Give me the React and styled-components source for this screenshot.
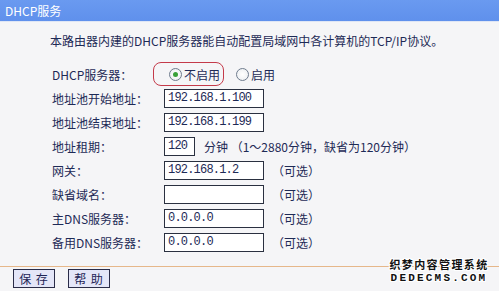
import React, { useState } from 'react';
import styled, { createGlobalStyle } from 'styled-components';

const GlobalStyle = createGlobalStyle`
  html, body {
    margin: 0;
    padding: 0;
    background: #f5f5f7;
  }
  body {
    font-family: "Noto Sans CJK SC", "Liberation Sans", sans-serif;
    font-size: 12px;
    color: #1e2a56;
  }
`;

const Page = styled.div`
  position: relative;
  width: 499px;
  height: 291px;
  overflow: hidden;
  background: #f5f5f7;
`;

const Header = styled.div`
  height: 21px;
  background: linear-gradient(#6a9af0, #5f90ec);
  border-bottom: 1px solid #dfe6f5;
  color: #fff;
  font-size: 12px;
  line-height: 21px;
  padding-left: 5px;
`;

const Intro = styled.p`
  margin: 12px 0 0 50px;
  line-height: 14px;
  height: 14px;
  white-space: nowrap;
`;

const Form = styled.div`
  margin: 14px 0 0 52px;
  display: grid;
  grid-template-columns: 112px 1fr;
  grid-auto-rows: 24px;
  align-items: center;
`;

const Label = styled.div`
  white-space: nowrap;
`;

const Field = styled.div`
  display: flex;
  align-items: center;
  white-space: nowrap;
`;

const Input = styled.input`
  box-sizing: border-box;
  width: ${({ w }) => w || 100}px;
  height: 19px;
  border: 1px solid #2a3040;
  background: #fff;
  padding: 0 3px;
  font-family: "Liberation Mono", monospace;
  font-size: 12px;
  letter-spacing: -0.8px;
  color: #1e2a56;
  outline: none;
`;

const Note = styled.span`
  margin-left: ${({ gap }) => gap || 8}px;
`;

const Highlight = styled.span`
  display: flex;
  align-items: center;
  box-sizing: border-box;
  height: 24px;
  margin-left: -11px;
  padding: 0 3px 0 15px;
  border: 1px solid #c43a4a;
  border-radius: 8px;
`;

const RadioLabel = styled.label`
  display: flex;
  align-items: center;
  cursor: pointer;
  margin-left: ${({ gap }) => gap || 0}px;
`;

const RadioCircle = styled.span`
  box-sizing: border-box;
  width: 13px;
  height: 13px;
  margin-right: 2px;
  border-radius: 50%;
  border: 1px solid #6f7c8e;
  background: radial-gradient(circle, #fff 0%, #e9ecef 100%);
  display: flex;
  align-items: center;
  justify-content: center;
  &::after {
    content: '';
    width: 5px;
    height: 5px;
    border-radius: 50%;
    background: ${({ checked }) => (checked ? '#38a038' : 'transparent')};
  }
`;

const Divider = styled.div`
  margin-top: 12px;
  height: 1px;
  background: #e6b78a;
`;

const Footer = styled.div`
  display: flex;
  gap: 13px;
  padding: 2px 0 0 13px;
`;

const Button = styled.button`
  box-sizing: border-box;
  width: 42px;
  height: 19px;
  padding: 0;
  border: 1px solid #2a2c48;
  background: #e4e6f8;
  color: #1e2456;
  font-family: "Noto Sans CJK SC", sans-serif;
  font-size: 12px;
  line-height: 17px;
  letter-spacing: 1px;
  cursor: pointer;
`;

const Watermark = styled.div`
  position: absolute;
  right: 10px;
  top: 256px;
  width: 100px;
  display: flex;
  flex-direction: column;
  align-items: center;
  color: #111;
  font-weight: bold;
  text-shadow: -1px -1px 0 #fff, 1px -1px 0 #fff, -1px 1px 0 #fff, 1px 1px 0 #fff,
    0 1px 0 #fff, 0 -1px 0 #fff, 1px 0 0 #fff, -1px 0 0 #fff;
`;

const MarkCn = styled.div`
  font-size: 11px;
  line-height: 16px;
  letter-spacing: 1.4px;
  white-space: nowrap;
`;

const MarkEn = styled.div`
  font-family: "Liberation Mono", monospace;
  font-size: 11px;
  line-height: 13px;
  letter-spacing: 2.2px;
  white-space: nowrap;
`;

const rows = [
  { label: '地址池开始地址：', value: '192.168.1.100' },
  { label: '地址池结束地址：', value: '192.168.1.199' },
  { label: '地址租期：', value: '120', w: 31, note: '分钟 （1～2880分钟，缺省为120分钟）', gap: 9 },
  { label: '网关：', value: '192.168.1.2', note: '（可选）' },
  { label: '缺省域名：', value: '', note: '（可选）' },
  { label: '主DNS服务器：', value: '0.0.0.0', note: '（可选）' },
  { label: '备用DNS服务器：', value: '0.0.0.0', note: '（可选）' },
];

const App = () => {
  const [enabled, setEnabled] = useState(false);

  return (
    <Page>
      <GlobalStyle />
      <Header>DHCP服务</Header>
      <Intro>本路由器内建的DHCP服务器能自动配置局域网中各计算机的TCP/IP协议。</Intro>
      <Form>
        <Label>DHCP服务器：</Label>
        <Field>
          <Highlight>
            <RadioLabel onClick={() => setEnabled(false)}>
              <RadioCircle checked={!enabled} />
              不启用
            </RadioLabel>
          </Highlight>
          <RadioLabel gap={12} onClick={() => setEnabled(true)}>
            <RadioCircle checked={enabled} />
            启用
          </RadioLabel>
        </Field>
        {rows.map(r => (
          <React.Fragment key={r.label}>
            <Label>{r.label}</Label>
            <Field>
              <Input w={r.w} defaultValue={r.value} />
              {r.note && <Note gap={r.gap}>{r.note}</Note>}
            </Field>
          </React.Fragment>
        ))}
      </Form>
      <Divider />
      <Footer>
        <Button>保 存</Button>
        <Button>帮 助</Button>
      </Footer>
      <Watermark>
        <MarkCn>织梦内容管理系统</MarkCn>
        <MarkEn>DEDECMS.COM</MarkEn>
      </Watermark>
    </Page>
  );
};

export default App;
